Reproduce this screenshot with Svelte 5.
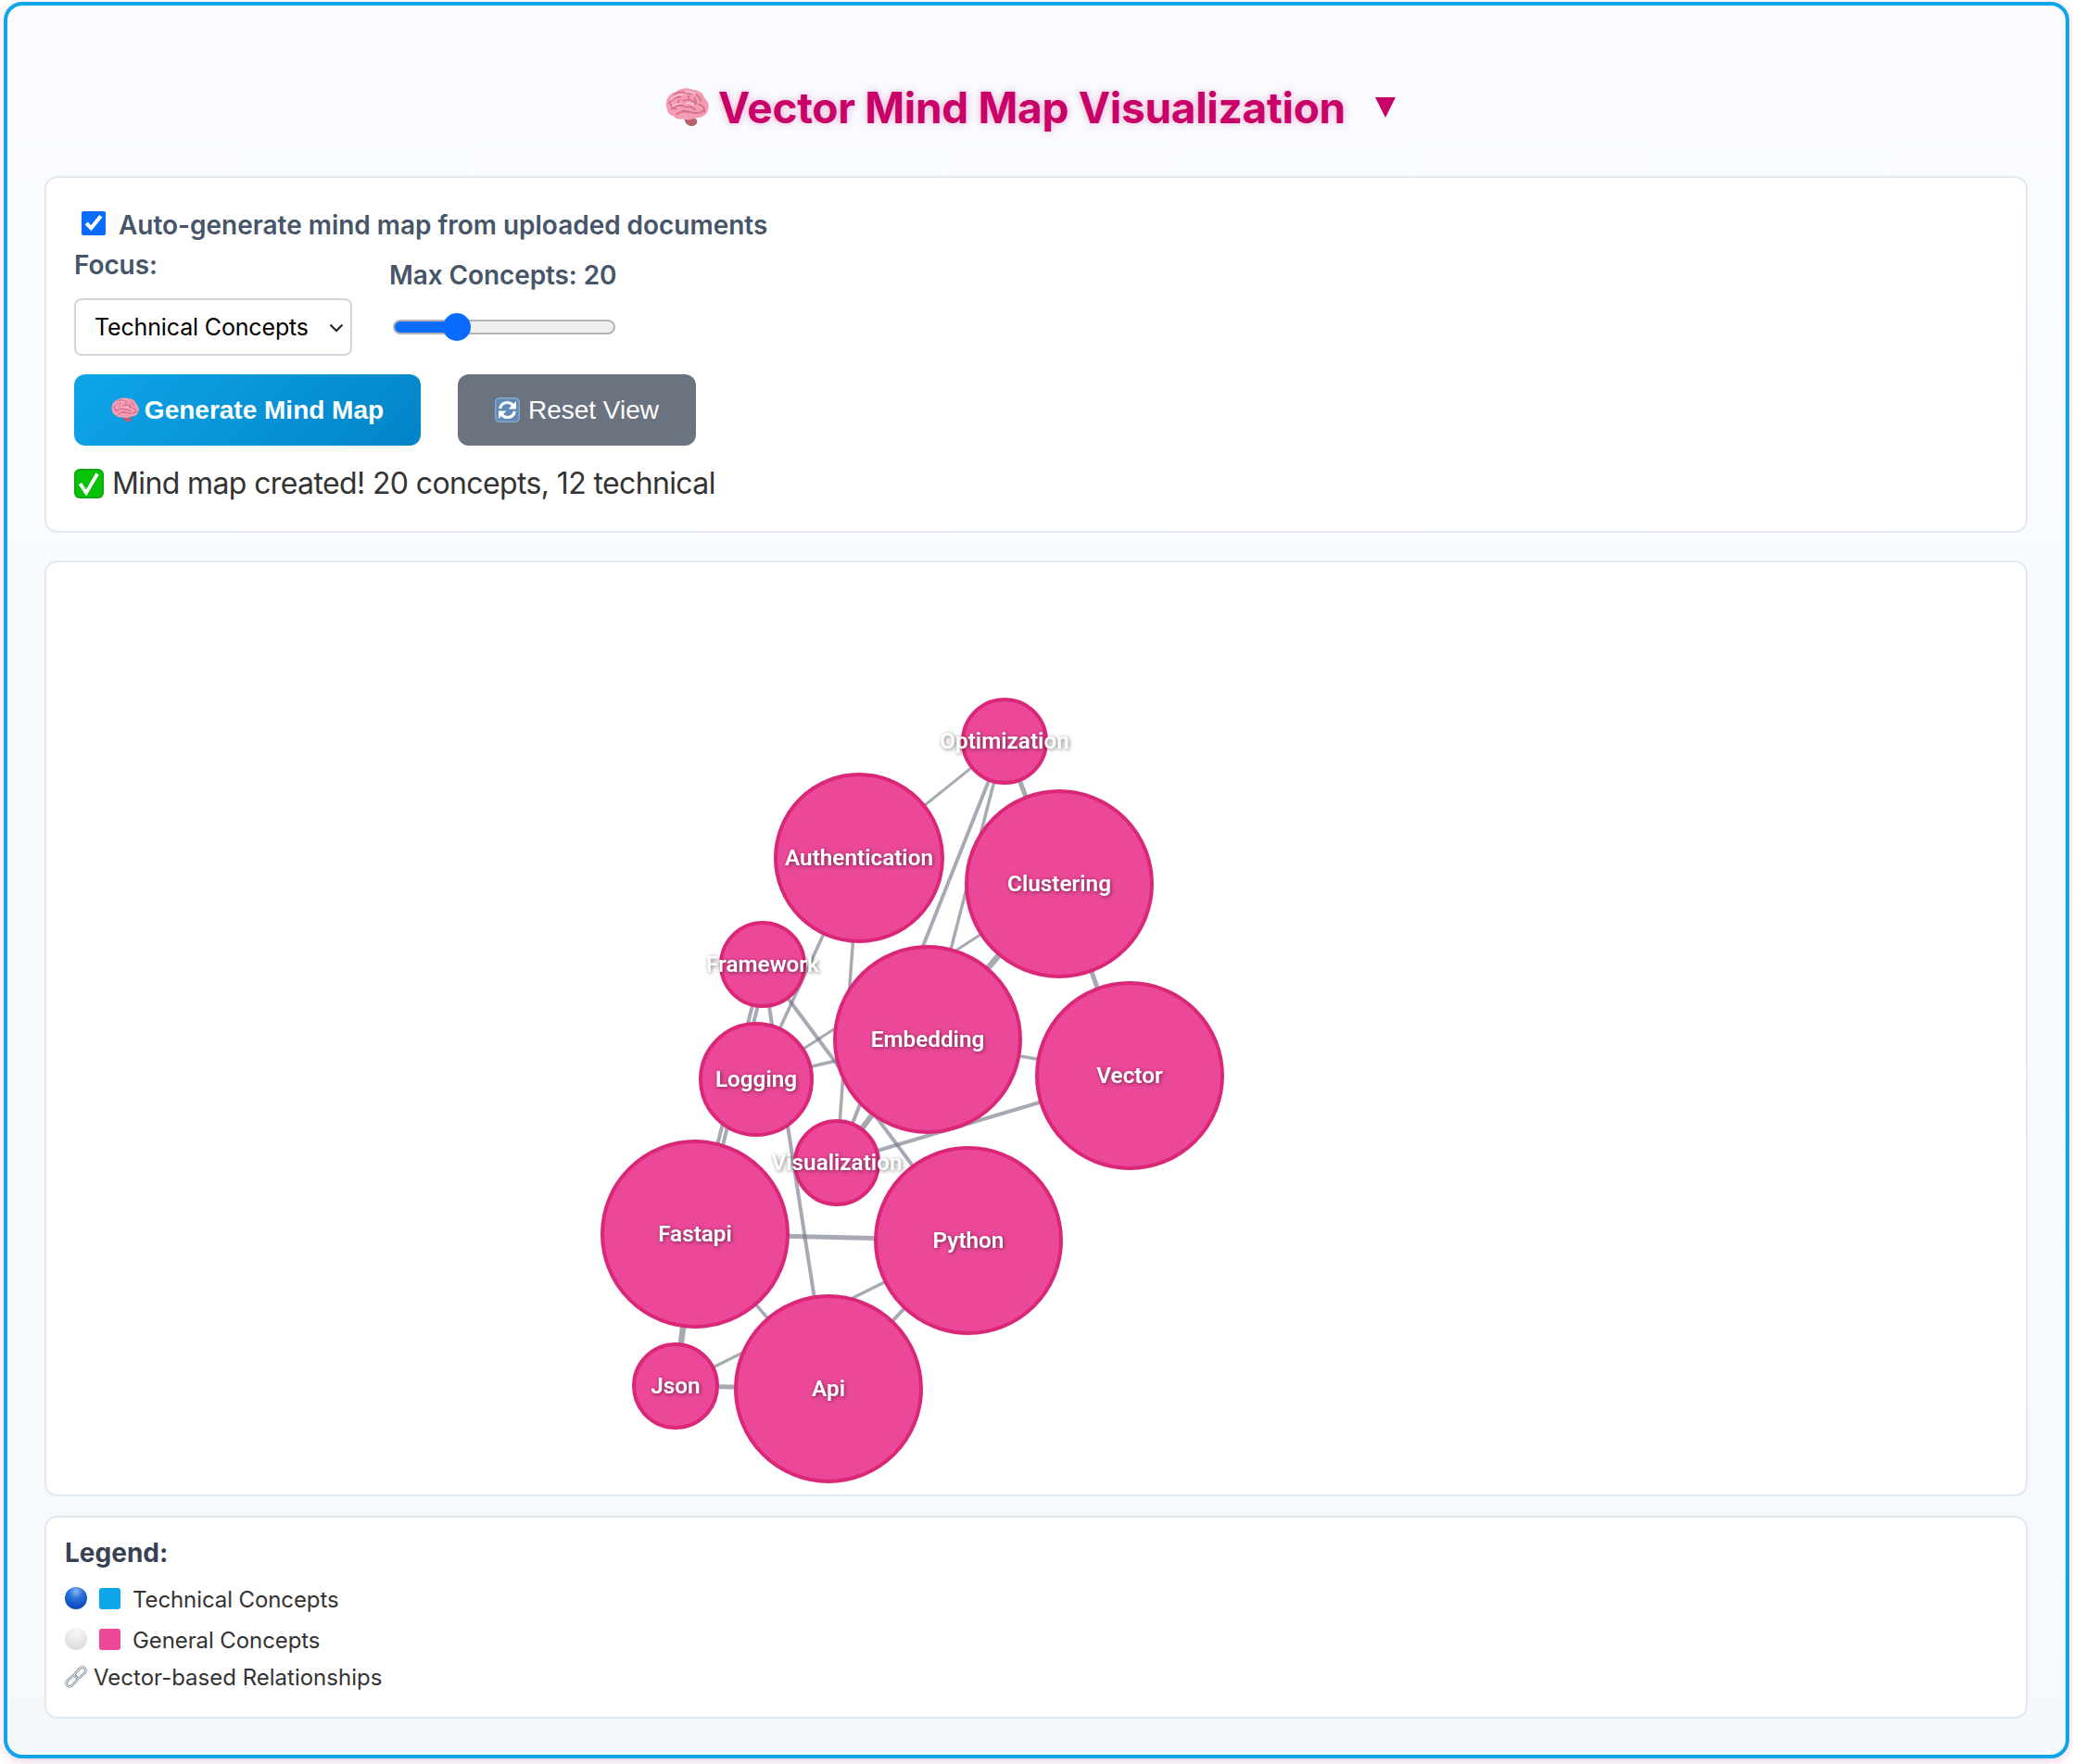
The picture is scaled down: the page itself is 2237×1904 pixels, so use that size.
<script lang="ts">
  type Node = { name: string; x: number; y: number; r: number };

  const nodes: Record<string, Node> = {
    opt: { name: 'Optimization', x: 1084, y: 800, r: 45 },
    auth: { name: 'Authentication', x: 927, y: 926, r: 90 },
    clu: { name: 'Clustering', x: 1143, y: 954, r: 100 },
    fra: { name: 'Framework', x: 823, y: 1041, r: 45 },
    emb: { name: 'Embedding', x: 1001, y: 1122, r: 100 },
    vec: { name: 'Vector', x: 1219, y: 1161, r: 100 },
    log: { name: 'Logging', x: 816, y: 1165, r: 60 },
    vis: { name: 'Visualization', x: 903, y: 1255, r: 45 },
    fas: { name: 'Fastapi', x: 750, y: 1332, r: 100 },
    pyt: { name: 'Python', x: 1045, y: 1339, r: 100 },
    jso: { name: 'Json', x: 729, y: 1496, r: 45 },
    api: { name: 'Api', x: 894, y: 1499, r: 100 },
  };

  // [from, to, width, sideways offset] read off the picture; heavier lines are
  // stronger relations, and the offset keeps a doubled relation visibly doubled
  const edges: [string, string, number, number?][] = [
    ['opt', 'auth', 3],
    ['opt', 'vis', 4],
    ['opt', 'emb', 3.5],
    ['opt', 'clu', 5],
    ['clu', 'emb', 6.5],
    ['clu', 'vec', 5],
    ['clu', 'log', 3],
    ['emb', 'vec', 3.5],
    ['emb', 'log', 3.5],
    ['emb', 'vis', 6],
    ['vec', 'vis', 4],
    ['auth', 'log', 3.5],
    ['auth', 'vis', 3.5],
    ['fra', 'fas', 4],
    ['fra', 'fas', 4, 6],
    ['fra', 'api', 4],
    ['fra', 'pyt', 4],
    ['fas', 'pyt', 5],
    ['pyt', 'api', 4],
    ['pyt', 'jso', 3.5],
    ['fas', 'api', 3.5],
    ['fas', 'jso', 6.5],
    ['jso', 'api', 5],
  ];

  const canvasTop = 605;
  const canvasLeft = 48;

  let autoGenerate = $state(true);
  let focus = $state('technical');
  let maxConcepts = $state(20);

  const fill = $derived(((maxConcepts - 10) / 40) * 100);
</script>

{#snippet brain(size: number)}
  <svg class="emoji" width={size} height={size * 0.875} viewBox="1 1 48 42" aria-hidden="true">
    <path d="M27 33c4 0 9 1 9 5 0 3-3 5-6 5-4 0-7-3-8-7z" fill="#b8626e" />
    <path d="M2 21C1 13 6 6 13 5c4-4 13-5 19-2 6 0 11 4 12 9 4 3 6 9 4 13-1 6-7 9-13 9-5 2-11 3-15 1-4 1-8 0-10-3-4 0-7-4-8-11z" fill="#f49db2" />
    <path d="M5 18c3-5 7-8 13-7M11 8c5-3 12-3 18 0M29 6c5 1 10 4 11 9M21 15c5-2 11-1 14 3M38 19c4 1 7 4 6 8M8 24c3-4 9-5 13-3M23 22c4-1 8 0 11 3M13 30c5-3 12-4 17-2 5 1 10 1 13-2M7 19c1 3 3 5 6 5M33 12c2 3 2 5 1 7M16 15c-1 2-1 4 0 5M26 10c1 1 1 3 0 4M20 26c3 0 5 1 6 2" fill="none" stroke="#d5698a" stroke-width="1.7" stroke-linecap="round" />
    <path d="M7 14c4-4 9-6 13-6M23 5c4 0 9 1 11 3M9 21c3-2 6-3 9-3M24 18c3-1 6 0 8 2" fill="none" stroke="#fcc8d4" stroke-width="1.5" stroke-linecap="round" />
  </svg>
{/snippet}

<div class="page">
  <h2 class="title">
    {@render brain(47)}
    <span>Vector Mind Map Visualization</span>
    <svg class="caret" width="22" height="22" viewBox="0 0 22 22" aria-hidden="true"><path d="M0 0h22L11 22z" /></svg>
  </h2>

  <section class="card controls">
    <label class="auto">
      <input type="checkbox" bind:checked={autoGenerate} />
      Auto-generate mind map from uploaded documents
    </label>

    <div class="fields">
      <div class="field">
        <label class="lab" for="focus">Focus:</label>
        <div class="select-wrap">
          <select id="focus" bind:value={focus}>
            <option value="technical">Technical Concepts</option>
            <option value="general">General Concepts</option>
          </select>
          <svg class="chev" width="16" height="10" viewBox="0 0 16 10" aria-hidden="true"><path d="M1.5 1.5 8 8l6.5-6.5" /></svg>
        </div>
      </div>
      <div class="field slider">
        <label class="lab" for="max">Max Concepts: {maxConcepts}</label>
        <input
          id="max"
          type="range"
          min="10"
          max="50"
          bind:value={maxConcepts}
          style="--fill: {fill}%"
        />
      </div>
    </div>

    <div class="actions">
      <button class="primary" type="button">{@render brain(30)}Generate Mind Map</button>
      <button class="secondary" type="button">
        <svg class="emoji" width="27" height="27" viewBox="0 0 27 27" aria-hidden="true">
          <rect width="27" height="27" rx="5" fill="#86a9cc" />
          <rect x="1.5" y="1.5" width="24" height="24" rx="4" fill="#5f8ab5" />
          <path d="M5.500 12c1-4 4-6.500 8-6.500 2.500 0 4.500 1 6 3" fill="none" stroke="#fff" stroke-width="3.200" />
          <path d="M23 4v8.500h-8.500z" fill="#fff" />
          <path d="M21.500 15c-1 4-4 6.500-8 6.500-2.500 0-4.500-1-6-3" fill="none" stroke="#fff" stroke-width="3.200" />
          <path d="M4 23v-8.500h8.500z" fill="#fff" />
        </svg>
        Reset View
      </button>
    </div>

    <p class="status">
      <svg class="emoji" width="32" height="32" viewBox="0 0 32 32" aria-hidden="true">
        <rect width="32" height="32" rx="6" fill="#0fa80f" />
        <rect x="2" y="2" width="28" height="28" rx="4" fill="#0ac20a" />
        <path d="M6.500 16 13 26 25 5.500" fill="none" stroke="#fff" stroke-width="3.800" />
      </svg>
      Mind map created! 20 concepts, 12 technical
    </p>
  </section>

  <section class="card canvas">
    <svg class="graph" viewBox="{canvasLeft} {canvasTop} 2139 1010" role="img" aria-label="Mind map">
      {#each edges as [a, b, w, off = 0]}
        <line class="edge" x1={nodes[a].x + off} y1={nodes[a].y} x2={nodes[b].x + off} y2={nodes[b].y} stroke-width={w} />
      {/each}
      {#each Object.values(nodes) as n}
        <circle class="node" cx={n.x} cy={n.y} r={n.r} />
      {/each}
      {#each Object.values(nodes) as n}
        <text class="label" x={n.x} y={n.y + 8}>{n.name}</text>
      {/each}
    </svg>
  </section>

  <section class="card legend">
    <strong class="legend-title">Legend:</strong>
    <div class="row tech">
      <span class="ball blue"></span>
      <span class="swatch sky"></span>
      Technical Concepts
    </div>
    <div class="row gen">
      <span class="ball white"></span>
      <span class="swatch pink"></span>
      General Concepts
    </div>
    <div class="row link">
      <svg class="emoji" width="24" height="24" viewBox="0 0 24 24" aria-hidden="true">
        <g fill="none">
          <rect x="-7" y="-3.500" width="14" height="7" rx="3.500" transform="translate(7.500 16.500) rotate(-45)" stroke="#75838f" stroke-width="2.600" />
          <rect x="-7" y="-3.500" width="14" height="7" rx="3.500" transform="translate(7.500 16.500) rotate(-45)" stroke="#e3e9ef" stroke-width="1.100" />
          <rect x="-7" y="-3.500" width="14" height="7" rx="3.500" transform="translate(16.500 7.500) rotate(-45)" stroke="#75838f" stroke-width="2.600" />
          <rect x="-7" y="-3.500" width="14" height="7" rx="3.500" transform="translate(16.500 7.500) rotate(-45)" stroke="#e3e9ef" stroke-width="1.100" />
        </g>
      </svg>
      Vector-based Relationships
    </div>
  </section>
</div>

<style>
  :global(body) {
    margin: 0;
    background: #fff;
  }

  .page {
    box-sizing: border-box;
    width: 2229px;
    height: 1896px;
    margin: 2px 4px 6px;
    padding: 0 41px 0 40px;
    border: 4px solid #0ea5e9;
    border-radius: 20px;
    background: linear-gradient(180deg, #f9fbff, #f5f9fd);
    box-shadow: 0 3px 12px rgba(236, 72, 153, 0.25);
    font-family: Inter, sans-serif;
    display: flex;
    flex-direction: column;
  }

  .title {
    box-sizing: border-box;
    display: flex;
    align-items: center;
    justify-content: center;
    gap: 10px;
    height: 184px;
    margin: 0;
    padding: 36px 12px 0 0;
    font-size: 46px;
    font-weight: 700;
    letter-spacing: -0.3px;
    color: #c90067;
    text-shadow: 0 0 8px rgba(201, 0, 103, 0.3);
  }

  .caret {
    margin-left: 22px;
    fill: #c90067;
  }

  .emoji {
    flex: none;
  }

  .card {
    box-sizing: border-box;
    background: #fff;
    border: 2px solid #e2e8f0;
    border-radius: 14px;
  }

  .controls {
    height: 385px;
    padding: 32px 29px 0 30px;
  }

  .auto {
    display: flex;
    align-items: center;
    gap: 14px;
    height: 38px;
    font-size: 28px;
    font-weight: 600;
    letter-spacing: -0.03px;
    color: #475569;
  }

  .auto input {
    width: 26px;
    height: 26px;
    margin: -5px 0 0 8px;
    accent-color: #0a6cff;
  }

  .fields {
    display: flex;
    gap: 40px;
    margin-top: 5px;
  }

  .field {
    display: flex;
    flex-direction: column;
  }

  .lab {
    font-size: 28px;
    font-weight: 600;
    line-height: 38px;
    letter-spacing: -0.1px;
    color: #475569;
  }

  .select-wrap {
    position: relative;
    margin-top: 17px;
  }

  select {
    display: block;
    box-sizing: border-box;
    width: 300px;
    height: 62px;
    padding: 0 0 0 20px;
    border: 2px solid #d1d5db;
    border-radius: 8px;
    background: #fff;
    appearance: none;
    font-family: Inter, sans-serif;
    font-size: 25px;
    letter-spacing: -0.15px;
    color: #000;
  }

  .chev {
    position: absolute;
    right: 9px;
    top: 27px;
    fill: none;
    stroke: #222;
    stroke-width: 2;
    pointer-events: none;
  }

  .slider {
    padding-top: 11px;
  }

  input[type='range'] {
    appearance: none;
    width: 240px;
    height: 30px;
    margin: 22px 0 0 4px;
    background: transparent;
  }

  input[type='range']::-webkit-slider-runnable-track {
    box-sizing: border-box;
    height: 16px;
    border: 2px solid #b4b4b4;
    border-radius: 8px;
    background: linear-gradient(90deg, #0a6cff var(--fill), #efefef var(--fill));
  }

  input[type='range']::-webkit-slider-thumb {
    appearance: none;
    width: 30px;
    height: 30px;
    margin-top: -9px;
    border: 0;
    border-radius: 50%;
    background: #0a6cff;
  }

  .actions {
    display: flex;
    gap: 40px;
    margin-top: 20px;
  }

  button {
    display: flex;
    align-items: center;
    justify-content: center;
    height: 77px;
    border: 0;
    border-radius: 12px;
    font-family: 'Liberation Sans', Arial, sans-serif;
    font-size: 28px;
    color: #fff;
  }

  .primary {
    width: 374px;
    gap: 6px;
    font-weight: 700;
    background: linear-gradient(135deg, #0ea5e9, #0284c7);
  }

  .secondary {
    width: 257px;
    gap: 9px;
    background: #6b7280;
  }

  .status {
    display: flex;
    align-items: center;
    gap: 9px;
    margin: 19px 0 0;
    font-size: 32px;
    line-height: 44px;
    letter-spacing: -0.62px;
    color: #333;
  }

  .canvas {
    height: 1010px;
    margin-top: 30px;
    overflow: hidden;
  }

  .graph {
    display: block;
    width: 2139px;
    height: 1010px;
    margin: -2px;
  }

  .edge {
    stroke: #6b7280;
    stroke-opacity: 0.6;
  }

  .node {
    fill: #ec4899;
    stroke: #db2777;
    stroke-width: 4;
  }

  .label {
    fill: #fff;
    font-family: Roboto, Inter, sans-serif;
    font-size: 24.3px;
    font-weight: 600;
    text-anchor: middle;
    filter: drop-shadow(1px 1px 2px rgba(0, 0, 0, 0.5));
  }

  .legend {
    height: 219px;
    margin-top: 21px;
    padding: 20px 20px 0;
    color: #333;
    font-size: 24px;
  }

  .legend-title {
    display: block;
    font-size: 28px;
    font-weight: 700;
    line-height: 36px;
    color: #374151;
  }

  .row {
    display: flex;
    align-items: center;
    height: 30px;
  }

  .tech {
    margin-top: 17px;
    letter-spacing: -0.1px;
  }

  .gen {
    margin-top: 14px;
    letter-spacing: -0.1px;
  }

  .link {
    margin-top: 10px;
    gap: 7px;
  }

  .ball {
    width: 24px;
    height: 24px;
    margin: -3px 13px 0 0;
    border-radius: 50%;
  }

  .blue {
    background: radial-gradient(circle at 50% 20%, #8fb4f0 0, #2a6fd8 35%, #0038b0 100%);
  }

  .white {
    background: radial-gradient(circle at 50% 20%, #f8f8f8 0, #e4e4e4 60%, #d2d2d2 100%);
  }

  .swatch {
    width: 23px;
    height: 23px;
    margin: -1px 13px 0 0;
    border-radius: 3px;
  }

  .sky {
    background: #0ea5e9;
  }

  .pink {
    background: #ec4899;
  }
</style>
